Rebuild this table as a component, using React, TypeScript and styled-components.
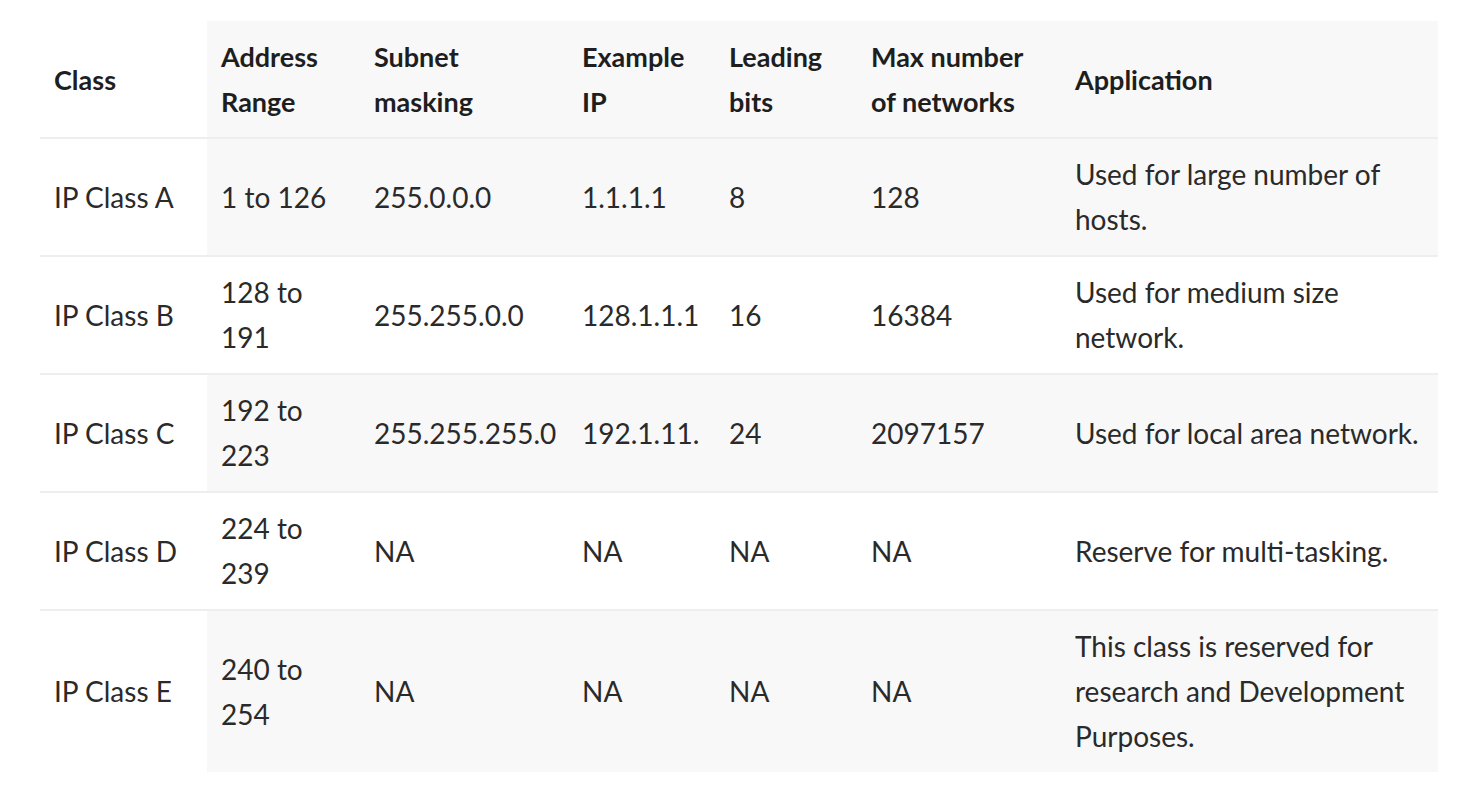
import React from "react";
import styled, { createGlobalStyle } from "styled-components";

const GlobalStyle = createGlobalStyle`
  html, body {
    margin: 0;
    padding: 0;
    background: #ffffff;
  }
  body {
    font-family: "Lato", "Noto Sans", sans-serif;
  }
`;

const Page = styled.div`
  padding: 21px 20px 0 40px;
`;

const Table = styled.table`
  width: 1398px;
  border-collapse: collapse;
  table-layout: fixed;
  font-family: "Lato", "Noto Sans", sans-serif;
  font-size: 28px;
  line-height: 45px;
  color: #2a2a2a;
`;

const Row = styled.tr<{ $shaded: boolean; $last?: boolean }>`
  border-bottom: ${(p) => (p.$last ? "none" : "2px solid #eeeeee")};
  & > td:not(:first-child),
  & > th:not(:first-child) {
    background: ${(p) => (p.$shaded ? "#f8f8f8" : "#ffffff")};
  }
`;

const HeadCell = styled.th`
  text-align: left;
  vertical-align: middle;
  font-size: 27px;
  font-weight: 700;
  color: #1e1e1e;
  padding: 13px 14px;
  white-space: nowrap;
`;

const Cell = styled.td`
  text-align: left;
  vertical-align: middle;
  font-weight: 400;
  padding: 13px 14px;
  white-space: nowrap;
`;

const Line = styled.span`
  display: block;
`;

const widths = [167, 153, 208, 147, 142, 204, 377];

const headers: string[][] = [
  ["Class"],
  ["Address", "Range"],
  ["Subnet", "masking"],
  ["Example", "IP"],
  ["Leading", "bits"],
  ["Max number", "of networks"],
  ["Application"],
];

const rows: string[][][] = [
  [["IP Class A"], ["1 to 126"], ["255.0.0.0"], ["1.1.1.1"], ["8"], ["128"], ["Used for large number of", "hosts."]],
  [["IP Class B"], ["128 to", "191"], ["255.255.0.0"], ["128.1.1.1"], ["16"], ["16384"], ["Used for medium size", "network."]],
  [["IP Class C"], ["192 to", "223"], ["255.255.255.0"], ["192.1.11."], ["24"], ["2097157"], ["Used for local area network."]],
  [["IP Class D"], ["224 to", "239"], ["NA"], ["NA"], ["NA"], ["NA"], ["Reserve for multi-tasking."]],
  [["IP Class E"], ["240 to", "254"], ["NA"], ["NA"], ["NA"], ["NA"], ["This class is reserved for", "research and Development", "Purposes."]],
];

const renderLines = (lines: string[]) =>
  lines.map((l, i) => <Line key={i}>{l}</Line>);

export default function App() {
  return (
    <>
      <GlobalStyle />
      <Page>
        <Table>
          <colgroup>
            {widths.map((w, i) => (
              <col key={i} style={{ width: w }} />
            ))}
          </colgroup>
          <thead>
            <Row $shaded>
              {headers.map((h, i) => (
                <HeadCell key={i}>{renderLines(h)}</HeadCell>
              ))}
            </Row>
          </thead>
          <tbody>
            {rows.map((r, ri) => (
              <Row key={ri} $shaded={ri % 2 === 0} $last={ri === rows.length - 1}>
                {r.map((c, ci) => (
                  <Cell key={ci}>{renderLines(c)}</Cell>
                ))}
              </Row>
            ))}
          </tbody>
        </Table>
      </Page>
    </>
  );
}
